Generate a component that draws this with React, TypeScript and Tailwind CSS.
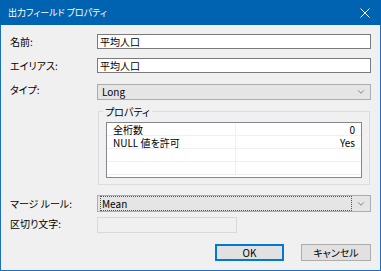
import { ChevronDown } from 'lucide-react';

const font = { fontFamily: '"Noto Sans CJK JP", "Noto Sans", sans-serif' };

const rows = [
    { name: '全桁数', value: '0' },
    { name: 'NULL 値を許可', value: 'Yes' },
    { name: '', value: '' },
    { name: '', value: '' },
];

function Label({ text, className = '' }: { text: string; className?: string }) {
    return <div className={`w-[87px] shrink-0 text-[10px] leading-[13px] text-black ${className}`}>{text}</div>;
}

function Combo({ value, focused }: { value: string; focused?: boolean }) {
    return (
        <div className="flex-1 flex items-center bg-[#e5e5e5] border border-[#adadad] pl-[2px] pr-[4px]">
            <div className={`flex-1 h-full flex items-center text-[10px] leading-[12px] ${focused ? 'border border-dotted border-[#555]' : 'border border-transparent'}`}>
                <span className="pl-[1px]">{value}</span>
            </div>
            <ChevronDown className="w-[10px] h-[10px] ml-[4px] text-[#444]" strokeWidth={1.5} />
        </div>
    );
}

export default function App() {
    return (
        <div className="w-[381px] h-[271px] bg-[#f0f0f0] flex flex-col text-black [font-feature-settings:'palt']" style={font}>
            {/* Title bar */}
            <div className="h-[25px] bg-[#0063b1] flex items-center justify-between pl-[8px] pr-[8px] text-white">
                <span className="text-[9px] leading-[11px]">出力フィールド プロパティ</span>
                <svg width="10" height="10" viewBox="0 0 10 10" className="mr-[3px]">
                    <path d="M0.5 0.5L9.5 9.5M9.5 0.5L0.5 9.5" stroke="white" strokeWidth="1" />
                </svg>
            </div>

            {/* Body */}
            <div className="flex-1 flex flex-col border-x border-b border-[#1a6fc0] pl-[9px] pr-[9px]">
                <div className="flex items-start mt-[9px]">
                    <Label text="名前:" className="mt-[1px]" />
                    <div className="flex-1 h-[15px] bg-white border border-[#7a7a7a] flex items-center pl-[2px] text-[10px] leading-[12px]">平均人口</div>
                </div>
                <div className="flex items-start mt-[9px]">
                    <Label text="エイリアス:" className="mt-[1px]" />
                    <div className="flex-1 h-[15px] bg-white border border-[#7a7a7a] flex items-center pl-[2px] text-[10px] leading-[12px]">平均人口</div>
                </div>
                <div className="flex items-start mt-[11px]">
                    <Label text="タイプ:" className="-mt-[1px]" />
                    <div className="flex-1 h-[16px] flex">
                        <Combo value="Long" />
                    </div>
                </div>

                {/* Group box */}
                <div className="flex mt-[11px]">
                    <div className="w-[88px] shrink-0" />
                    <div className="relative flex-1 h-[74px] border border-[#dcdcdc] mr-[1px] px-[7px] pt-[10px]">
                        <span className="absolute -top-[7px] left-[4px] bg-[#f0f0f0] px-[2px] text-[10px] leading-[13px]">プロパティ</span>
                        <div className="h-[56px] bg-white border border-[#828790] flex flex-col">
                            {rows.map((r, i) => (
                                <div key={i} className="h-[13px] flex items-center border-b border-[#f0f0f0] text-[10px] leading-[11px]">
                                    <div className="w-[129px] h-full flex items-center border-r border-[#f0f0f0] pl-[6px] whitespace-nowrap">{r.name}</div>
                                    <div className="flex-1 text-right pr-[6px]">{r.value}</div>
                                </div>
                            ))}
                        </div>
                    </div>
                </div>

                <div className="flex items-start mt-[10px]">
                    <Label text="マージ ルール:" className="mt-[2px]" />
                    <div className="flex-1 h-[17px] flex">
                        <Combo value="Mean" focused />
                    </div>
                </div>
                <div className="flex items-start mt-[5px]">
                    <Label text="区切り文字:" className="mt-[0px]" />
                    <div className="w-[140px] h-[16px] border border-[#d9d9d9]" />
                </div>

                <div className="flex justify-end gap-[17px] mt-[11px]">
                    <button className="w-[69px] h-[17px] bg-[#e1e1e1] border-2 border-[#0078d7] text-[10px] leading-[12px] flex items-center justify-center">OK</button>
                    <button className="w-[70px] h-[17px] bg-[#e1e1e1] border border-[#adadad] text-[10px] leading-[12px] flex items-center justify-center">キャンセル</button>
                </div>
            </div>
        </div>
    );
}
